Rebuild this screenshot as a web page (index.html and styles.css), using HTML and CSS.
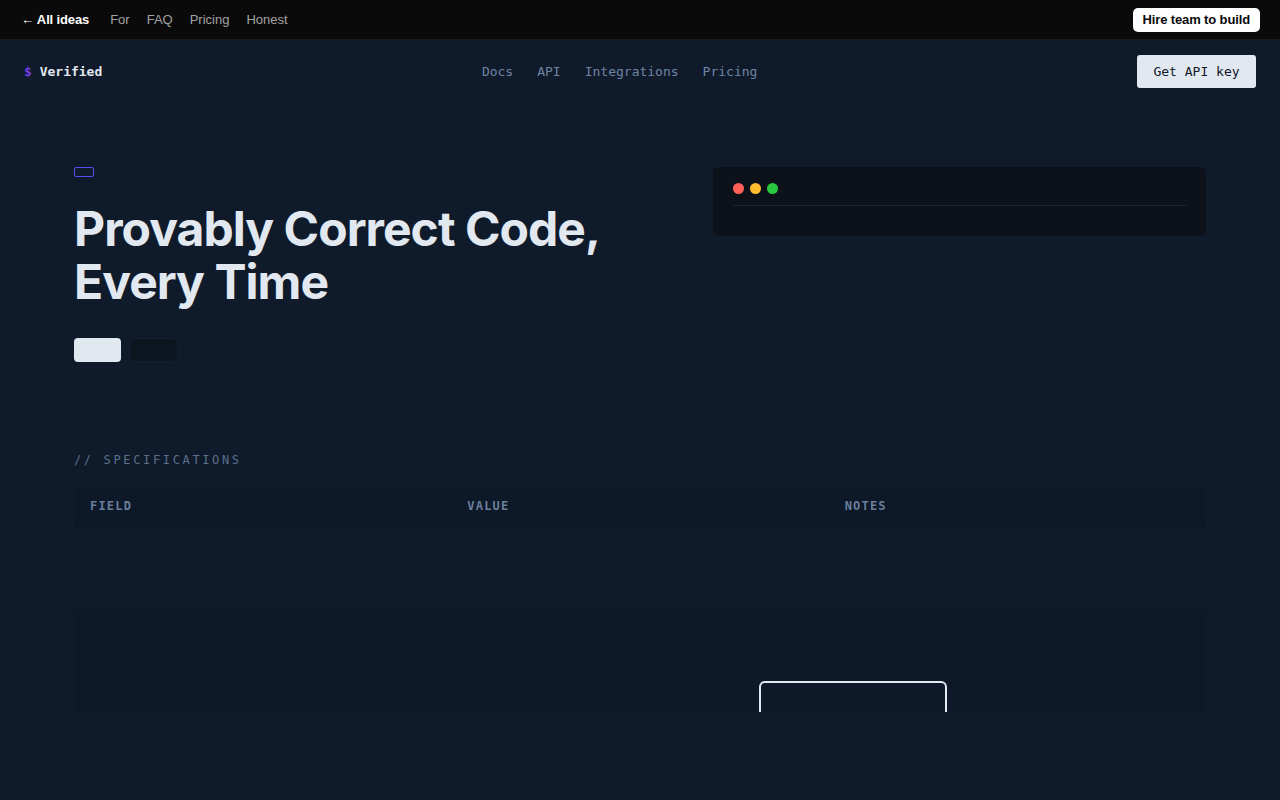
FILE: index.html
```html
<!DOCTYPE html>
<html lang="en">
<head>
<meta charset="utf-8">
<title>Verified</title>
<link rel="stylesheet" href="styles.css">
</head>
<body>
<header class="topbar">
  <nav class="topbar-left">
    <a class="back" href="#">← All ideas</a>
    <a href="#">For</a>
    <a href="#">FAQ</a>
    <a href="#">Pricing</a>
    <a href="#">Honest</a>
  </nav>
  <a class="hire" href="#">Hire team to build</a>
</header>

<div class="page">
  <nav class="site-nav">
    <div class="brand"><span class="dollar">$</span> Verified</div>
    <div class="links">
      <a href="#">Docs</a>
      <a href="#">API</a>
      <a href="#">Integrations</a>
      <a href="#">Pricing</a>
    </div>
    <a class="api-btn" href="#">Get API key</a>
  </nav>

  <main class="container">
    <section class="hero">
      <div class="hero-text">
        <span class="badge"></span>
        <h1>Provably Correct Code,<br>Every Time</h1>
        <div class="actions">
          <span class="btn btn-light"></span>
          <span class="btn btn-dark"></span>
        </div>
      </div>
      <div class="terminal">
        <div class="dots">
          <span class="dot red"></span>
          <span class="dot yellow"></span>
          <span class="dot green"></span>
        </div>
        <div class="term-line"></div>
      </div>
    </section>

    <section class="specs">
      <div class="label">// SPECIFICATIONS</div>
      <div class="table-head">
        <div class="cell">FIELD</div>
        <div class="cell">VALUE</div>
        <div class="cell">NOTES</div>
      </div>
    </section>

    <section class="cta">
      <div class="cta-inner"></div>
    </section>
  </main>
</div>
</body>
</html>
```

FILE: styles.css
```css
* { box-sizing: border-box; }
html, body { margin: 0; padding: 0; }
body {
  background: #0f1b2a;
  color: #e2e8f0;
  font-family: "Liberation Sans", Arial, sans-serif;
  height: 800px;
  overflow: hidden;
}
a { text-decoration: none; color: inherit; }

.topbar {
  height: 40px;
  background: #0a0a0a;
  border-bottom: 1px solid #161a20;
  display: flex;
  align-items: center;
  justify-content: space-between;
  padding: 0 20px 0 21px;
  font-size: 13px;
}
.topbar-left { display: flex; align-items: center; gap: 17px; }
.topbar-left a { color: #a3a3a3; }
.topbar-left a.back { color: #ffffff; font-weight: 700; margin-right: 4px; letter-spacing: -0.01em; }
.hire {
  background: #ffffff;
  color: #0a0a0a;
  font-weight: 700;
  font-size: 13px;
  padding: 0 10px;
  height: 24px;
  line-height: 24px;
  border-radius: 5px;
  letter-spacing: -0.01em;
}

.site-nav {
  height: 63px;
  display: flex;
  align-items: center;
  justify-content: space-between;
  padding: 0 24px;
  font-family: "DejaVu Sans Mono", monospace;
  font-size: 13px;
}
.brand { font-weight: 700; color: #e2e8f0; }
.dollar { color: #6d3fe0; }
.links { display: flex; gap: 24px; }
.links a { color: #6f85a3; }
.api-btn {
  width: 119px;
  height: 33px;
  line-height: 33px;
  text-align: center;
  background: #e2e8f0;
  color: #0f172a;
  border-radius: 3px;
}

.container { width: 1132px; margin: 0 auto; }

.hero {
  display: grid;
  grid-template-columns: 1fr 493px;
  gap: 48px;
  padding-top: 64px;
}
.badge {
  display: block;
  width: 20px;
  height: 10px;
  border: 1px solid #5b4cf0;
  border-radius: 2px;
}
h1 {
  font-family: Inter, "Liberation Sans", sans-serif;
  font-weight: 700;
  font-size: 48px;
  line-height: 1.1;
  letter-spacing: -0.02em;
  margin: 26px 0 0;
  color: #e2e8f0;
}
.actions { display: flex; gap: 9px; margin-top: 29px; }
.btn { display: block; width: 47px; height: 24px; border-radius: 4px; }
.btn-light { background: #e2e8f0; }
.btn-dark { background: #0d1520; border: 1px solid #131d2b; width: 48px; }

.terminal {
  background: #0d1119;
  border-radius: 6px;
  height: 69px;
  padding: 16px 20px 0;
}
.dots { display: flex; gap: 6px; }
.dot { width: 11px; height: 11px; border-radius: 50%; }
.red { background: #ff5f57; }
.yellow { background: #febc2e; }
.green { background: #28c840; }
.term-line { height: 1px; background: #1e232c; margin-top: 11px; }

.specs { margin-top: 90px; }
.label {
  font-family: "DejaVu Sans Mono", monospace;
  font-size: 12px;
  line-height: 16px;
  letter-spacing: 0.22em;
  color: #5b6f8c;
}
.table-head {
  margin-top: 18px;
  height: 42px;
  background: #0d1828;
  border-bottom: 1px solid #0c1522;
  display: grid;
  grid-template-columns: repeat(3, 1fr);
  align-items: center;
  font-family: "DejaVu Sans Mono", monospace;
  font-size: 12px;
  font-weight: 700;
  letter-spacing: 0.1em;
  color: #6b7f9c;
}
.cell { padding: 0 16px; }

.cta {
  margin-top: 81px;
  height: 103px;
  overflow: hidden;
  background: #0d1929;
  border: 1px solid #0e1826;
  border-bottom: none;
  border-radius: 4px 4px 0 0;
  padding: 71px 0 0 684px;
}
.cta-inner {
  width: 188px;
  height: 80px;
  border: 2px solid #e2e8f0;
  border-radius: 6px;
}
```
